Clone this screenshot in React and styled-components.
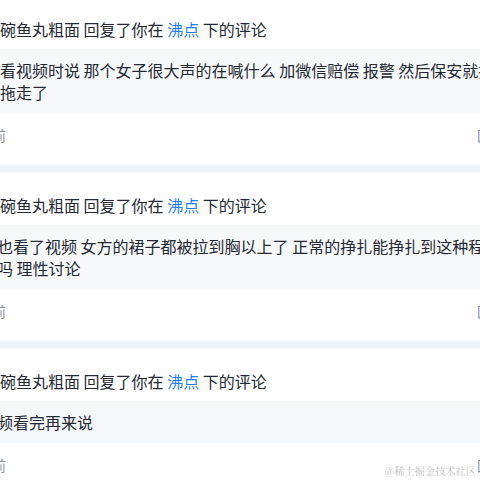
import React from 'react';
import styled, { createGlobalStyle } from 'styled-components';

const GlobalStyle = createGlobalStyle`
  html, body {
    margin: 0;
    padding: 0;
    background: #f2f3f5;
    overflow: hidden;
  }
  body {
    font-family: "Noto Sans CJK SC", "Noto Sans", sans-serif;
  }
`;

const Page = styled.div`
  position: relative;
  width: 480px;
  height: 480px;
  overflow: hidden;
`;

const List = styled.ul`
  list-style: none;
  margin: -3px 0 0 -20px;
  padding: 0;
  width: 540px;
  display: flex;
  flex-direction: column;
  gap: 8px;
`;

const Card = styled.li`
  background: #fff;
  padding: 20px 0 0 20px;
`;

const Title = styled.div`
  font-size: 16px;
  line-height: 24px;
  color: #252933;
  margin-bottom: 8px;
  white-space: nowrap;
`;

const Link = styled.span`
  color: #1e80ff;
`;

const Quote = styled.div`
  background: #f7f8fa;
  padding: 10px 0;
  font-size: 16px;
  line-height: 22px;
  color: #252933;
`;

const QuoteText = styled.div`
  width: ${(p) => p.$width}px;
  margin-left: ${(p) => p.$indent || 0}px;
`;

const Footer = styled.div`
  display: flex;
  justify-content: space-between;
  align-items: center;
  padding: 11px 0 19px;
  font-size: 14px;
  line-height: 22px;
  color: #8a919f;
  width: 505px;
`;

const Time = styled.span`
  margin-left: -22px;
`;

const Reply = styled.span`
  color: #8a919f;
`;

const Watermark = styled.div`
  position: absolute;
  right: 4px;
  bottom: 2px;
  font-family: "Noto Serif CJK SC", "Noto Sans CJK SC", serif;
  font-size: 10px;
  line-height: 14px;
  color: #bcbec3;
  letter-spacing: 0.2px;
`;

const items = [
  {
    text: '看视频时说 那个女子很大声的在喊什么 加微信赔偿 报警 然后保安就把拖走了',
    width: 502,
  },
  {
    text: '也看了视频 女方的裙子都被拉到胸以上了 正常的挣扎能挣扎到这种程度吗 理性讨论',
    width: 510,
    indent: -3,
  },
  {
    text: '频看完再来说',
    width: 502,
    indent: -3,
  },
];

export default function App() {
  return (
    <>
      <GlobalStyle />
      <Page>
        <List>
          {items.map((item, i) => (
            <Card key={i}>
              <Title>
                碗鱼丸粗面 回复了你在 <Link>沸点</Link> 下的评论
              </Title>
              <Quote>
                <QuoteText $width={item.width} $indent={item.indent}>
                  {item.text}
                </QuoteText>
              </Quote>
              <Footer>
                <Time>天前</Time>
                <Reply>回复</Reply>
              </Footer>
            </Card>
          ))}
        </List>
        <Watermark>@稀土掘金技术社区</Watermark>
      </Page>
    </>
  );
}
